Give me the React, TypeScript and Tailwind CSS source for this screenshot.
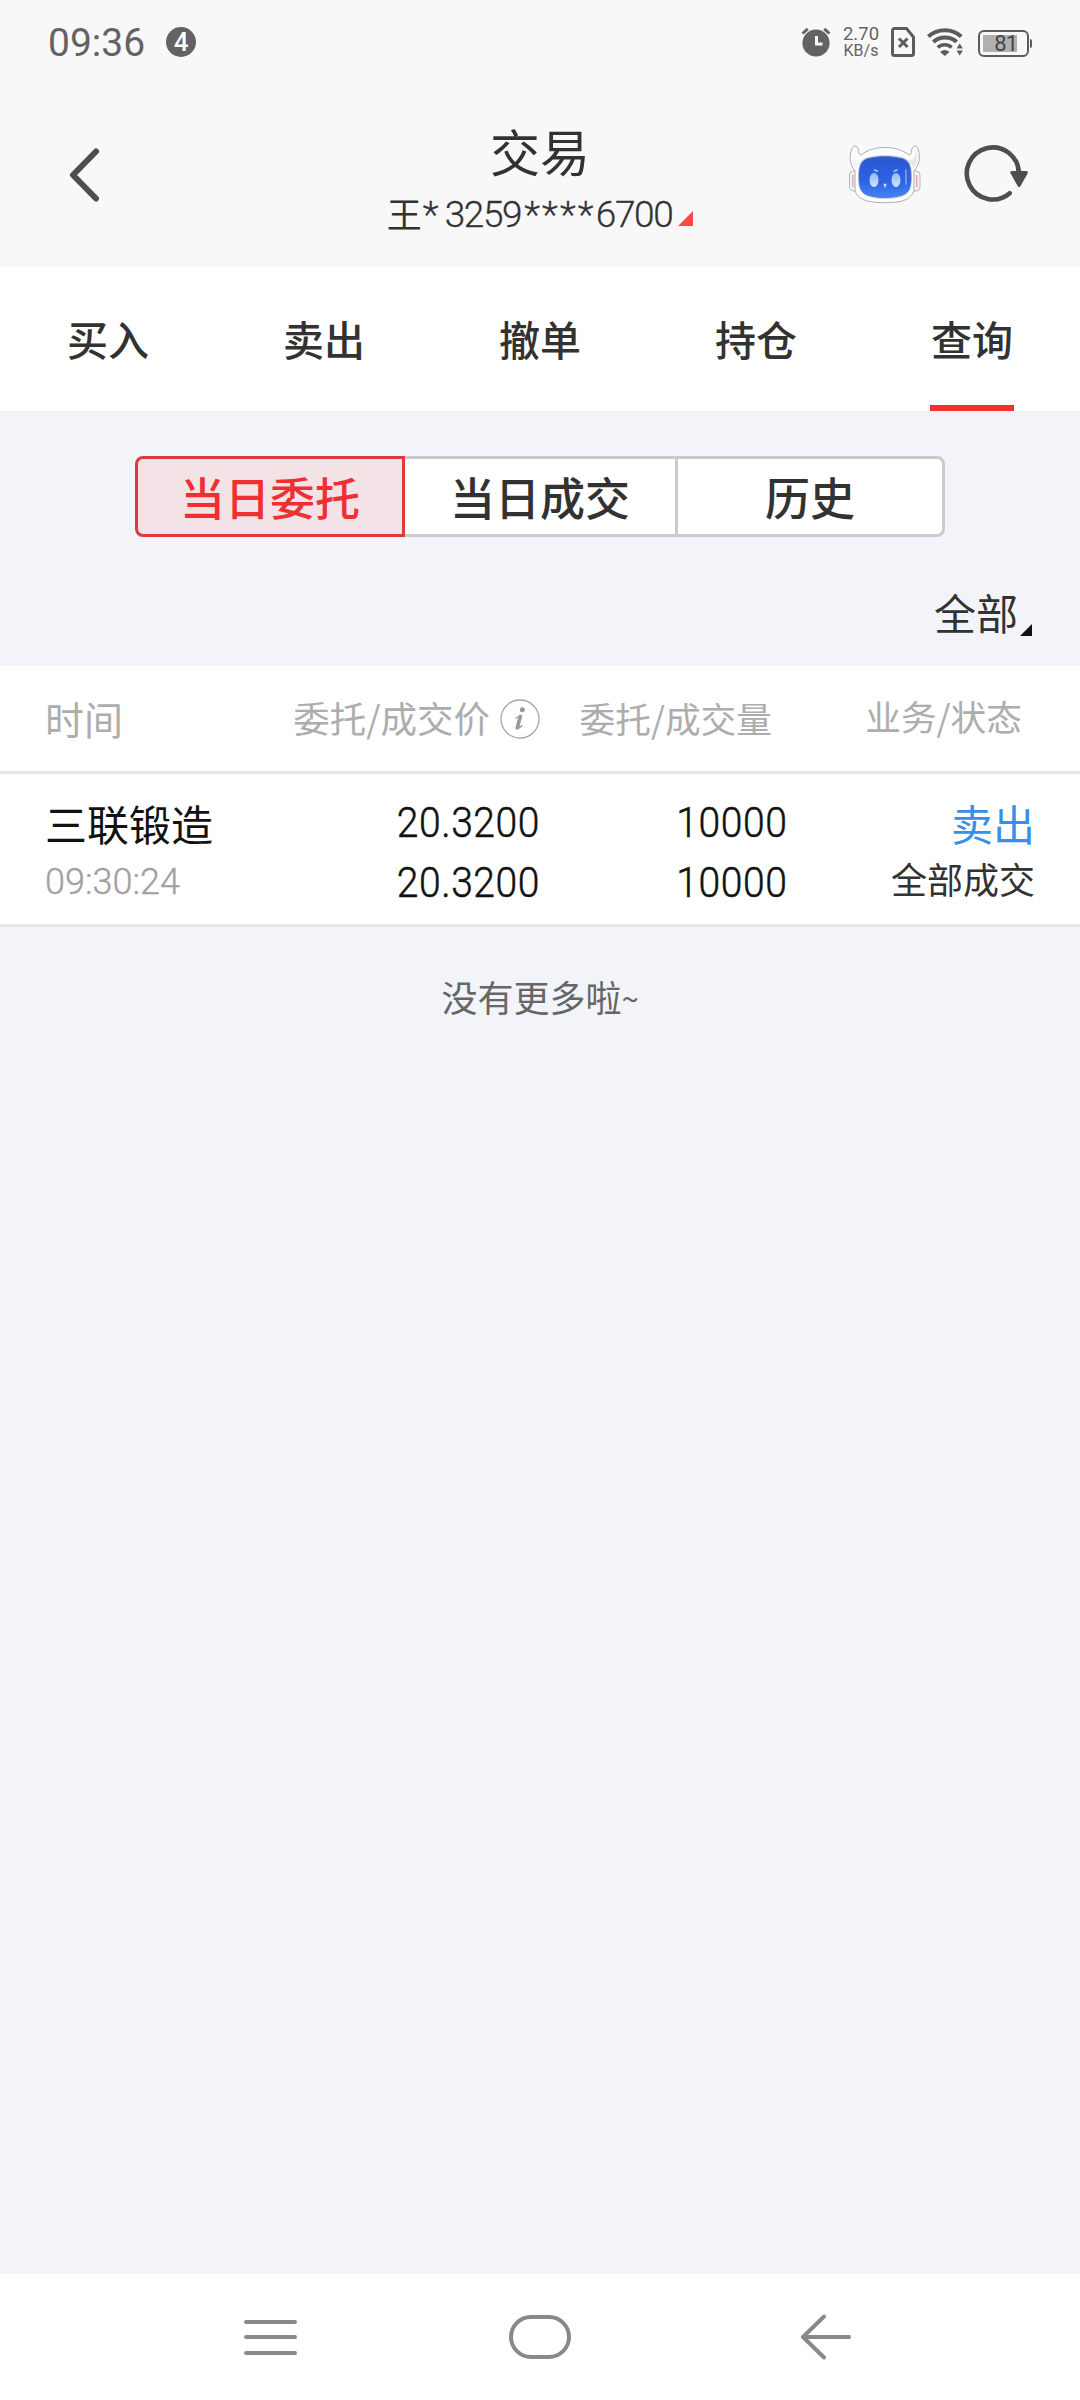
import React, {FC, ReactNode} from 'react';

const TABS = ['买入', '卖出', '撤单', '持仓', '查询'];
const SEGMENTS = ['当日委托', '当日成交', '历史'];

const ORDERS = [
  {
    name: '三联锻造',
    time: '09:30:24',
    orderPrice: '20.3200',
    dealPrice: '20.3200',
    orderAmount: '10000',
    dealAmount: '10000',
    side: '卖出',
    status: '全部成交',
  },
];

const Digits: FC<{className?: string; children: ReactNode}> = ({className = '', children}) => (
  <span className={`font-[Roboto,sans-serif] whitespace-nowrap ${className}`}>{children}</span>
);

// narrow figures, a little heavier than the light face
const Figure: FC<{children: ReactNode}> = ({children}) => (
  <Digits className="text-[42px] leading-[60px] font-light tracking-[0.6px] origin-right scale-x-[0.93] [-webkit-text-stroke:0.5px_#111]">{children}</Digits>
);

const AlarmIcon: FC = () => (
  <svg width="30" height="30" viewBox="0 0 30 30" className="shrink-0">
    <circle cx="15" cy="16" r="13.6" fill="#636363" />
    <path d="M1.5 6.5 6.8 1.8M28.5 6.5 23.2 1.8" stroke="#636363" strokeWidth="3" />
    <path d="M15.5 9v8h6" fill="none" stroke="#f8f8f8" strokeWidth="3" />
  </svg>
);

const SimIcon: FC = () => (
  <svg width="24" height="30" viewBox="0 0 24 30" className="shrink-0">
    <path d="M3.5 1.5h12l7 8.5v16.5a2 2 0 0 1-2 2h-17a2 2 0 0 1-2-2v-23a2 2 0 0 1 2-2z" fill="none" stroke="#5c5c5c" strokeWidth="3" />
    <path d="M8 11.5l8.5 8.5M16.5 11.5 8 20" stroke="#5c5c5c" strokeWidth="3" />
  </svg>
);

const WifiIcon: FC = () => (
  <svg width="36" height="28" viewBox="0 0 36 28" className="shrink-0">
    <g fill="none" stroke="#5c5c5c" strokeWidth="4">
      <path d="M1.3 8.5c9-8.5 24-8.5 33 0" />
      <path d="M6.3 14c6.5-6 17-6 23.4 0" />
      <path d="M10.8 19.5c4-3.7 10-3.7 13.8 0" strokeWidth="3.5" />
    </g>
    <path d="M13 24c3-2.7 6.5-2.7 9.5 0l-4.7 4z" fill="#5c5c5c" />
    <path d="M28.5 14.5h8v14h-8z" fill="#f8f8f8" />
    <path d="M29.5 20.5l3.2-5 3.2 5zM29.5 22.5l3.2 5 3.2-5z" fill="#5c5c5c" />
  </svg>
);

const Battery: FC = () => (
  <div className="flex items-center">
    <div className="w-[51px] h-[27px] rounded-[6px] border-2 border-[#5c5c5c] p-[3px] flex items-center">
      <div className="w-[34px] h-[17px] bg-[#b0b0b0] flex items-center justify-end">
        <Digits className="text-[22px] leading-[17px] text-[#454545] tracking-[-1px]">81</Digits>
      </div>
    </div>
    <div className="w-[2px] h-[9px] ml-px rounded-r bg-[#5c5c5c]" />
  </div>
);

const StatusBar: FC = () => (
  <div className="h-[84px] pl-[48px] pr-[48px] flex items-center text-[#636363]">
    <Digits className="text-[39px] leading-[40px] pt-px">09:36</Digits>
    <span className="ml-[21px] size-[30px] rounded-full bg-[#636363] text-white flex items-center justify-center">
      <Digits className="text-[26px] leading-[30px] font-medium">4</Digits>
    </span>
    <div className="ml-auto flex items-center">
      <AlarmIcon />
      <div className="ml-[11px] w-[38px] flex flex-col items-center font-[Roboto,sans-serif]">
        <span className="text-[18.5px] leading-[18px]">2.70</span>
        <span className="text-[16px] leading-[16px]">KB/s</span>
      </div>
      <div className="ml-[11px]"><SimIcon /></div>
      <div className="ml-[12px]"><WifiIcon /></div>
      <div className="ml-[15px] mt-[2px]"><Battery /></div>
    </div>
  </div>
);

const RobotIcon: FC = () => (
  <svg width="72" height="60" viewBox="0 0 72 60">
    <defs>
      <linearGradient id="face" x1="0" y1="0" x2="0" y2="1">
        <stop offset="0" stopColor="#2c57cf" />
        <stop offset="0.6" stopColor="#2c63e4" />
        <stop offset="1" stopColor="#4286f2" />
      </linearGradient>
      <linearGradient id="eye" x1="0" y1="0" x2="0" y2="1">
        <stop offset="0" stopColor="#8fbcf7" />
        <stop offset="1" stopColor="#d3e6ff" />
      </linearGradient>
      <linearGradient id="horn" x1="0" y1="0" x2="1" y2="1">
        <stop offset="0" stopColor="#fff" />
        <stop offset="1" stopColor="#dfe4ea" />
      </linearGradient>
    </defs>
    <rect x="0.5" y="26" width="10" height="20" rx="4" fill="#f4f4f5" stroke="#a9a9ad" strokeWidth="0.8" />
    <rect x="61" y="26" width="10" height="20" rx="4" fill="#f4f4f5" stroke="#a9a9ad" strokeWidth="0.8" />
    <path
      d="M6 26C1 20-.5 12 3 4c1-4 5-4 6 0 1 3 0 5 3 6 12-10 36-10 48 0 3-1 2-3 3-6 1-4 5-4 6 0 3 8 1 16-4 22v20c-3 7-9 10-17 11-8 1-16 1-24 0C15 56 9 53 6 46z"
      fill="#fbfcfd"
      stroke="#a4a5a9"
      strokeWidth="0.9"
    />
    <path d="M6 23C2 17 2 11 4.5 4c2 6 1 12 8 11zM65 23c4-6 4-12 2-19-2 6-1 12-8 11z" fill="url(#horn)" />
    <path d="M3.8 30v12M67.7 30v12" stroke="#dca9a9" strokeWidth="1.4" />
    <path d="M22 11.500c9-2 19-2 28 0 10 1 13 7 13 20s-3 19-13 21c-9 2-19 2-28 0-10-2-13-8-13-21s3-19 13-20z" fill="#cfd7e6" />
    <path d="M22 13c9-2 19-2 28 0 9 1 12 6 12 19s-3 17-12 19c-9 2-19 2-28 0-9-2-12-6-12-19s3-18 12-19z" fill="url(#face)" stroke="#4e6fc2" strokeWidth="0.8" />
    <ellipse cx="25" cy="35" rx="4.5" ry="7" fill="url(#eye)" />
    <ellipse cx="47" cy="35" rx="4.5" ry="7" fill="url(#eye)" />
    <path d="M25.500 25l3 1.300M45 26.300l3-1.300" stroke="#a8cdfc" strokeWidth="1.5" strokeLinecap="round" />
    <path d="M34.200 38.800h3.600l-1.800 4.400z" fill="#c4dcff" />
    <path d="M57 25v14" stroke="#7fa7f2" strokeWidth="1.5" strokeLinecap="round" />
  </svg>
);

const RefreshIcon: FC = () => (
  <svg width="66" height="60" viewBox="0 0 66 60">
    <path d="M45.700 48.200A26 26 0 1 1 54.800 28" fill="none" stroke="#4e4e4e" strokeWidth="4.600" strokeLinecap="round" />
    <path d="M47.800 27.500h14.600l-7.300 13z" fill="#4e4e4e" stroke="#4e4e4e" strokeWidth="3" strokeLinejoin="round" />
  </svg>
);

const InfoIcon: FC = () => (
  <svg width="40" height="40" viewBox="0 0 40 40" className="shrink-0">
    <circle cx="20" cy="20" r="19" fill="none" stroke="#a8a8a8" strokeWidth="1.3" />
    <circle cx="22.3" cy="10.8" r="2.5" fill="#999" />
    <path d="M15.5 19.5c2-1.8 4-2.7 6-2.9l-3 11.5c-.4 1.5.2 1.7 3.8-1.8" fill="none" stroke="#999" strokeWidth="1.2" />
    <path d="M20.2 17.5l-3 11.5" stroke="#999" strokeWidth="3.4" strokeLinecap="round" />
  </svg>
);

const Header: FC = () => (
  <header className="h-[183px] flex items-start justify-between text-[#323232]">
    <div className="w-[250px] pt-[64px] pl-[67px]">
      <svg width="34" height="54" viewBox="0 0 34 54">
        <path d="M29 3.5 6 27 29 50.5" fill="none" stroke="#4e4e4e" strokeWidth="6" strokeLinecap="round" strokeLinejoin="round" />
      </svg>
    </div>
    <div className="flex flex-col items-center pt-[36px]">
      <h1 className="text-[50px] leading-[60px]">交易</h1>
      <div className="flex items-center h-[60px] mt-[5px]">
        <span className="text-[35px] leading-[56px] pb-[5px]">王</span>
        <Digits className="text-[37px] leading-[60px] font-light tracking-[-1.4px] ml-px [-webkit-text-stroke:0.3px_#323232]">
          * 3259<span className="tracking-[2.2px] ml-[3px]">****</span>6700
        </Digits>
        <svg width="15" height="15" viewBox="0 0 15 15" className="ml-[6px] mt-[6px]">
          <path d="M15 0v15H0z" fill="#fb4848" />
        </svg>
      </div>
    </div>
    <div className="w-[250px] pt-[61px] pl-[19px] flex">
      <RobotIcon />
      <div className="ml-[43px]"><RefreshIcon /></div>
    </div>
  </header>
);

const Tabs: FC = () => (
  <nav className="h-[144px] bg-white grid grid-cols-5">
    {TABS.map((tab, i) => (
      <div key={tab} className="flex flex-col items-center justify-between">
        <span className="pt-[41px] text-[41px] leading-[60px] font-medium text-[#323232]">{tab}</span>
        {i === 4 && <span className="w-[84px] h-[6px] bg-[#f23030]" />}
      </div>
    ))}
  </nav>
);

const Segmented: FC = () => (
  <div className="mx-[135px] mt-[45px] h-[81px] grid grid-cols-3 text-[45px] leading-[75px] font-medium text-center text-[#323232]">
    <div className="rounded-l-[8px] border-3 border-[#e03a3e] bg-[#f3e2e6] text-[#ef3032]">{SEGMENTS[0]}</div>
    <div className="border-y-3 border-[#cbcbcb] bg-white">{SEGMENTS[1]}</div>
    <div className="rounded-r-[8px] border-3 border-[#cbcbcb] bg-white">{SEGMENTS[2]}</div>
  </div>
);

const OrderTable: FC = () => (
  <section className="bg-white">
    <div className="h-[108px] border-b-3 border-[#e6e7ec] pl-[45px] grid grid-cols-[235px_260px_247px_247px] items-center text-[36px] leading-[54px] text-[#adadad]">
      <span className="text-[39px] pb-px">时间</span>
      <span className="flex items-center justify-end whitespace-nowrap">
        <span className="pb-[2px] text-[36.5px]">委托/成交价</span>
        <span className="ml-[10px]"><InfoIcon /></span>
      </span>
      <span className="text-right pr-[15px] pb-[2px] text-[35.7px] whitespace-nowrap">委托/成交量</span>
      <span className="text-right pr-[12px] pb-[5px] text-[35.7px] whitespace-nowrap">业务/状态</span>
    </div>
    {ORDERS.map((order) => (
      <div key={order.time} className="h-[153px] border-b-3 border-[#e6e7ec] pl-[45px] pt-[19px] grid grid-cols-[235px_260px_247px_247px] items-start text-[#111]">
        <div className="flex flex-col">
          <span className="text-[42px] leading-[60px]">{order.name}</span>
          <Digits className="text-[36px] leading-[58px] font-light text-[#a0a0a0] [-webkit-text-stroke:0.3px_#a0a0a0]">{order.time}</Digits>
        </div>
        <div className="flex flex-col items-end">
          <Figure>{order.orderPrice}</Figure>
          <Figure>{order.dealPrice}</Figure>
        </div>
        <div className="flex flex-col items-end">
          <Figure>{order.orderAmount}</Figure>
          <Figure>{order.dealAmount}</Figure>
        </div>
        <div className="flex flex-col items-end -mr-px">
          <span className="text-[42px] leading-[60px] text-[#378fe9]">{order.side}</span>
          <span className="text-[36px] leading-[51px] text-[#323232]">{order.status}</span>
        </div>
      </div>
    ))}
  </section>
);

const NavBar: FC = () => (
  <footer className="h-[126px] bg-white grid grid-cols-[540px_540px] items-center">
    <div className="flex items-center pl-[242px]">
      <svg width="56" height="38" viewBox="0 0 56 38">
        <path d="M4 4h49M4 19h49M4 35h49" stroke="#898989" strokeWidth="4" strokeLinecap="round" />
      </svg>
      <span className="ml-[211px] -mr-[31px] w-[62px] h-[44px] rounded-[22px] border-4 border-[#898989]" />
    </div>
    <div className="pl-[258px]">
      <svg width="56" height="46" viewBox="0 0 56 46">
        <path d="M26 2.5 5 23l21 20.5M5 23h46" fill="none" stroke="#898989" strokeWidth="4" strokeLinecap="round" strokeLinejoin="round" />
      </svg>
    </div>
  </footer>
);

export default function App() {
  return (
    <div className="w-[1080px] h-[2400px] flex flex-col overflow-hidden bg-[#f3f4f9] font-['Noto_Sans_CJK_SC',sans-serif]">
      <div className="bg-[#f8f8f8]">
        <StatusBar />
        <Header />
      </div>
      <Tabs />
      <main className="flex-1">
        <Segmented />
        <div className="h-[129px] pr-[48px] pt-[45px] flex justify-end items-start">
          <span className="text-[42px] leading-[60px] text-[#323232]">全部</span>
          <svg width="12" height="12" viewBox="0 0 12 12" className="ml-[2px] mt-[42px]">
            <path d="M12 0v12H0z" fill="#111" />
          </svg>
        </div>
        <OrderTable />
        <p className="mt-[40px] flex justify-center items-center text-[36px] leading-[54px] text-[#666]">
          没有更多啦
          <span className="text-[31px] pt-[4px]">~</span>
        </p>
      </main>
      <NavBar />
    </div>
  );
}
